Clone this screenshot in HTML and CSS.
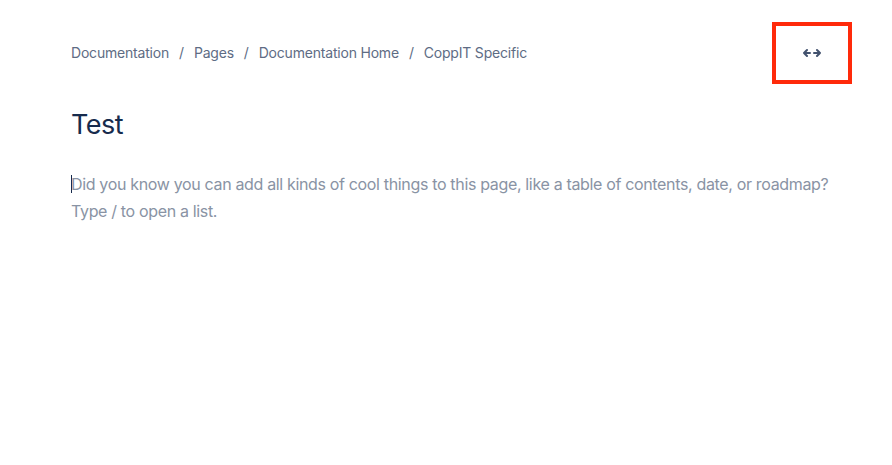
FILE: index.html
```html
<!DOCTYPE html>
<html lang="en">
<head>
    <meta charset="UTF-8">
    <title>Test</title>
    <link rel="stylesheet" href="styles.css">
</head>
<body>
    <div class="page">
        <div class="topbar">
            <nav class="crumbs">
                <a href="#">Documentation</a>
                <span class="sep">/</span>
                <a href="#">Pages</a>
                <span class="sep">/</span>
                <a href="#">Documentation Home</a>
                <span class="sep">/</span>
                <a href="#">CoppIT Specific</a>
            </nav>
            <div class="width-toggle">
                <svg width="18" height="10" viewBox="0 0 18 10">
                    <path d="M1 5h6M1 5l3-3M1 5l3 3" fill="none" stroke="#42526e" stroke-width="2" stroke-linecap="round" stroke-linejoin="round"/>
                    <path d="M11 5h6M17 5l-3-3M17 5l-3 3" fill="none" stroke="#42526e" stroke-width="2" stroke-linecap="round" stroke-linejoin="round"/>
                </svg>
            </div>
        </div>
        <h1 class="title">Test</h1>
        <p class="placeholder"><span class="caret"></span>Did you know you can add all kinds of cool things to this page, like a table of contents, date, or roadmap? Type / to open a list.</p>
    </div>
</body>
</html>
```

FILE: styles.css
```css
body {
    margin: 0;
    padding: 0;
    background-color: #fff;
    font-family: 'Inter', 'Noto Sans', sans-serif;
}

.page {
    padding: 21px 40px 0 71px;
}

.topbar {
    display: flex;
    justify-content: space-between;
    align-items: center;
    height: 63px;
}

.crumbs {
    font-size: 14px;
    letter-spacing: -0.2px;
    color: #5e6c84;
    display: flex;
    gap: 10px;
}

.crumbs a {
    color: #5e6c84;
    text-decoration: none;
}

.width-toggle {
    width: 72px;
    height: 54px;
    border: 4.5px solid #ff2a0a;
    display: flex;
    align-items: center;
    justify-content: center;
}

.title {
    font-size: 27px;
    font-weight: 400;
    letter-spacing: -0.5px;
    color: #172b4d;
    margin: 23px 0 0;
    line-height: 36px;
}

.placeholder {
    margin: 28px 0 0;
    font-size: 16px;
    letter-spacing: -0.34px;
    line-height: 27px;
    color: #8993a4;
    max-width: 770px;
}

.caret {
    display: inline-block;
    width: 1px;
    height: 18px;
    background: #172b4d;
    vertical-align: -3px;
    margin-right: -1px;
}
```
